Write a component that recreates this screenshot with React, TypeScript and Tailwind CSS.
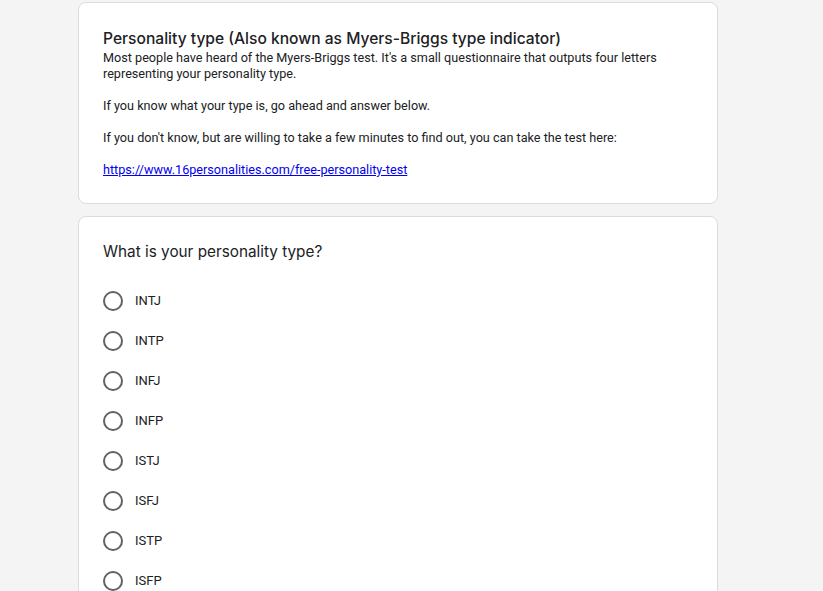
const options = ["INTJ", "INTP", "INFJ", "INFP", "ISTJ", "ISFJ", "ISTP", "ISFP", "ESTJ", "ESFJ"];

function Radio() {
  return <span className="w-5 h-5 rounded-full border-2 border-[#5f6368] shrink-0" />;
}

export default function App() {
  return (
    <div className="min-h-screen bg-[#f4f4f4] font-['Roboto',sans-serif]">
      <div className="w-[640px] ml-[78px] pt-[2px] flex flex-col gap-3">
        <div className="bg-white border border-[#dadce0] rounded-lg px-6 pt-[25px] pb-[25px]">
          <h2 className="font-['Inter',sans-serif] text-[15.6px] leading-[22px] font-medium text-[#202124]">
            Personality type (Also known as Myers-Briggs type indicator)
          </h2>
          <div className="text-[12.65px] leading-4 text-[#202124] whitespace-pre-wrap">
            {"Most people have heard of the Myers-Briggs test. It's a small questionnaire that outputs four letters\nrepresenting your personality type.\n\nIf you know what your type is, go ahead and answer below.\n\nIf you don't know, but are willing to take a few minutes to find out, you can take the test here:\n\n"}
            <a href="#" className="underline text-[#0000ee]">
              https://www.16personalities.com/free-personality-test
            </a>
          </div>
        </div>
        <div className="bg-white border border-[#dadce0] rounded-lg px-6 pt-[23px] pb-6">
          <div className="font-['Inter',sans-serif] text-[15.3px] leading-6 text-[#202124]">
            What is your personality type?
          </div>
          <div className="mt-[17px] flex flex-col">
            {options.map((o) => (
              <label key={o} className="h-10 flex items-center gap-3 text-[13px] text-[#202124]">
                <Radio />
                <span>{o}</span>
              </label>
            ))}
          </div>
        </div>
      </div>
    </div>
  );
}
